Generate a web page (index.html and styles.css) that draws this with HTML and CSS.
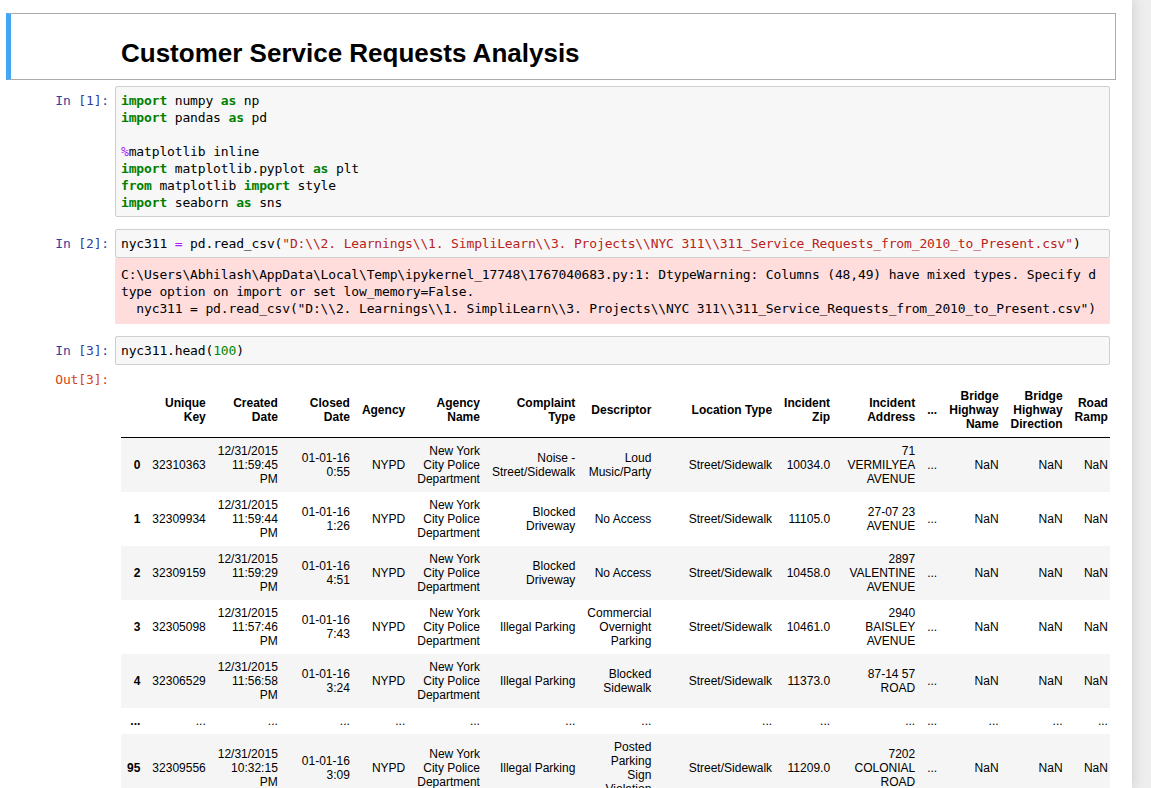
FILE: index.html
```html
<!DOCTYPE html>
<html>
<head>
<meta charset="utf-8">
<title>Customer Service Requests Analysis</title>
<link rel="stylesheet" href="styles.css">
</head>
<body>
<div class="page">
  <div class="notebook">
    <div class="cell text-cell selected">
      <div class="prompt"></div>
      <div class="md">
        <h1>Customer Service Requests Analysis</h1>
      </div>
    </div>

    <div class="cell code-cell">
      <div class="row">
        <div class="prompt in">In&nbsp;[1]:</div>
        <div class="input-area"><pre><span class="kw">import</span> numpy <span class="kw">as</span> np
<span class="kw">import</span> pandas <span class="kw">as</span> pd

<span class="op">%</span>matplotlib inline
<span class="kw">import</span> matplotlib.pyplot <span class="kw">as</span> plt
<span class="kw">from</span> matplotlib <span class="kw">import</span> style
<span class="kw">import</span> seaborn <span class="kw">as</span> sns</pre></div>
      </div>
    </div>

    <div class="cell code-cell">
      <div class="row">
        <div class="prompt in">In&nbsp;[2]:</div>
        <div class="input-area"><pre>nyc311 <span class="op">=</span> pd.read_csv(<span class="str">"D:\\2. Learnings\\1. SimpliLearn\\3. Projects\\NYC 311\\311_Service_Requests_from_2010_to_Present.csv"</span>)</pre></div>
      </div>
      <div class="row">
        <div class="prompt"></div>
        <div class="stderr"><pre>C:\Users\Abhilash\AppData\Local\Temp\ipykernel_17748\1767040683.py:1: DtypeWarning: Columns (48,49) have mixed types. Specify d
type option on import or set low_memory=False.
  nyc311 = pd.read_csv("D:\\2. Learnings\\1. SimpliLearn\\3. Projects\\NYC 311\\311_Service_Requests_from_2010_to_Present.csv")</pre></div>
      </div>
    </div>

    <div class="cell code-cell">
      <div class="row">
        <div class="prompt in">In&nbsp;[3]:</div>
        <div class="input-area"><pre>nyc311.head(<span class="num">100</span>)</pre></div>
      </div>
      <div class="row">
        <div class="prompt out">Out[3]:</div>
        <div class="output">
          <table class="dataframe">
            <thead>
              <tr>
                <th></th>
                <th>Unique Key</th>
                <th>Created Date</th>
                <th>Closed Date</th>
                <th>Agency</th>
                <th>Agency Name</th>
                <th>Complaint Type</th>
                <th>Descriptor</th>
                <th>Location Type</th>
                <th>Incident Zip</th>
                <th>Incident Address</th>
                <th>...</th>
                <th>Bridge Highway Name</th>
                <th>Bridge Highway Direction</th>
                <th>Road Ramp</th>
                <th>Bridge Highway Segment</th>
                <th>Garage Lot Name</th>
                <th>Ferry Direction</th>
                <th>Ferry Terminal Name</th>
                <th>Latitude</th>
                <th>Longitude</th>
                <th>Location</th>
              </tr>
            </thead>
            <tbody>
              <tr>
                <th>0</th><td>32310363</td><td>12/31/2015 11:59:45 PM</td><td>01-01-16 0:55</td><td>NYPD</td><td>New York City Police Department</td><td>Noise - Street/Sidewalk</td><td>Loud Music/Party</td><td>Street/Sidewalk</td><td>10034.0</td><td>71 VERMILYEA AVENUE</td><td>...</td><td>NaN</td><td>NaN</td><td>NaN</td><td>NaN</td><td>NaN</td><td>NaN</td><td>NaN</td><td>40.865682</td><td>-73.923501</td><td>(40.86568153633767, -73.92350095571744)</td>
              </tr>
              <tr>
                <th>1</th><td>32309934</td><td>12/31/2015 11:59:44 PM</td><td>01-01-16 1:26</td><td>NYPD</td><td>New York City Police Department</td><td>Blocked Driveway</td><td>No Access</td><td>Street/Sidewalk</td><td>11105.0</td><td>27-07 23 AVENUE</td><td>...</td><td>NaN</td><td>NaN</td><td>NaN</td><td>NaN</td><td>NaN</td><td>NaN</td><td>NaN</td><td>40.775945</td><td>-73.915094</td><td>(40.775945312321085, -73.91509393898605)</td>
              </tr>
              <tr>
                <th>2</th><td>32309159</td><td>12/31/2015 11:59:29 PM</td><td>01-01-16 4:51</td><td>NYPD</td><td>New York City Police Department</td><td>Blocked Driveway</td><td>No Access</td><td>Street/Sidewalk</td><td>10458.0</td><td>2897 VALENTINE AVENUE</td><td>...</td><td>NaN</td><td>NaN</td><td>NaN</td><td>NaN</td><td>NaN</td><td>NaN</td><td>NaN</td><td>40.870325</td><td>-73.888525</td><td>(40.870324522111424, -73.88852464418646)</td>
              </tr>
              <tr>
                <th>3</th><td>32305098</td><td>12/31/2015 11:57:46 PM</td><td>01-01-16 7:43</td><td>NYPD</td><td>New York City Police Department</td><td>Illegal Parking</td><td>Commercial Overnight Parking</td><td>Street/Sidewalk</td><td>10461.0</td><td>2940 BAISLEY AVENUE</td><td>...</td><td>NaN</td><td>NaN</td><td>NaN</td><td>NaN</td><td>NaN</td><td>NaN</td><td>NaN</td><td>40.835994</td><td>-73.828379</td><td>(40.83599404683083, -73.82837939584206)</td>
              </tr>
              <tr>
                <th>4</th><td>32306529</td><td>12/31/2015 11:56:58 PM</td><td>01-01-16 3:24</td><td>NYPD</td><td>New York City Police Department</td><td>Illegal Parking</td><td>Blocked Sidewalk</td><td>Street/Sidewalk</td><td>11373.0</td><td>87-14 57 ROAD</td><td>...</td><td>NaN</td><td>NaN</td><td>NaN</td><td>NaN</td><td>NaN</td><td>NaN</td><td>NaN</td><td>40.733060</td><td>-73.874170</td><td>(40.73305976760192, -73.8741704009403)</td>
              </tr>
              <tr>
                <th>...</th><td>...</td><td>...</td><td>...</td><td>...</td><td>...</td><td>...</td><td>...</td><td>...</td><td>...</td><td>...</td><td>...</td><td>...</td><td>...</td><td>...</td><td>...</td><td>...</td><td>...</td><td>...</td><td>...</td><td>...</td><td>...</td>
              </tr>
              <tr>
                <th>95</th><td>32309556</td><td>12/31/2015 10:32:15 PM</td><td>01-01-16 3:09</td><td>NYPD</td><td>New York City Police Department</td><td>Illegal Parking</td><td>Posted Parking Sign Violation</td><td>Street/Sidewalk</td><td>11209.0</td><td>7202 COLONIAL ROAD</td><td>...</td><td>NaN</td><td>NaN</td><td>NaN</td><td>NaN</td><td>NaN</td><td>NaN</td><td>NaN</td><td>40.631127</td><td>-74.030418</td><td>(40.63112711520051, -74.03041836548232)</td>
              </tr>
              <tr>
                <th>96</th><td>32308391</td><td>12/31/2015 10:31:48 PM</td><td>01-01-16 1:12</td><td>NYPD</td><td>New York City Police Department</td><td>Blocked Driveway</td><td>No Access</td><td>Street/Sidewalk</td><td>11432.0</td><td>89-19 168 STREET</td><td>...</td><td>NaN</td><td>NaN</td><td>NaN</td><td>NaN</td><td>NaN</td><td>NaN</td><td>NaN</td><td>40.708710</td><td>-73.794010</td><td>(40.70870962870543, -73.79400850916582)</td>
              </tr>
              <tr>
                <th>97</th><td>32305071</td><td>12/31/2015 10:31:39 PM</td><td>12/31/2015 23:41</td><td>NYPD</td><td>New York City Police Department</td><td>Noise - Commercial</td><td>Loud Music/Party</td><td>Club/Bar/Restaurant</td><td>10009.0</td><td>216 AVENUE A</td><td>...</td><td>NaN</td><td>NaN</td><td>NaN</td><td>NaN</td><td>NaN</td><td>NaN</td><td>NaN</td><td>40.730021</td><td>-73.982003</td><td>(40.73002126024502, -73.98200290374538)</td>
              </tr>
              <tr>
                <th>98</th><td>32306554</td><td>12/31/2015 10:30:59 PM</td><td>01-01-16 2:04</td><td>NYPD</td><td>New York City Police Department</td><td>Illegal Parking</td><td>Blocked Hydrant</td><td>Street/Sidewalk</td><td>10465.0</td><td>3200 EAST TREMONT AVENUE</td><td>...</td><td>NaN</td><td>NaN</td><td>NaN</td><td>NaN</td><td>NaN</td><td>NaN</td><td>NaN</td><td>40.833958</td><td>-73.826012</td><td>(40.83395801542312, -73.82601160713645)</td>
              </tr>
              <tr>
                <th>99</th><td>32306210</td><td>12/31/2015 10:30:13 PM</td><td>01-01-16 0:47</td><td>NYPD</td><td>New York City Police Department</td><td>Noise - Street/Sidewalk</td><td>Loud Talking</td><td>Street/Sidewalk</td><td>10467.0</td><td>1290 PELHAM BOULEVARD</td><td>...</td><td>NaN</td><td>NaN</td><td>NaN</td><td>NaN</td><td>NaN</td><td>NaN</td><td>NaN</td><td>40.872651</td><td>-73.867306</td><td>(40.87265088341617, -73.86730621507004)</td>
              </tr>
            </tbody>
          </table>
        </div>
      </div>
    </div>
  </div>
</div>
</body>
</html>
```

FILE: styles.css
```css
html, body {
  margin: 0;
  padding: 0;
}

body {
  background: #eeeeee;
  font-family: "Liberation Sans", Arial, Helvetica, sans-serif;
  font-size: 13px;
  color: #000;
}

.page {
  height: 788px;
  overflow: hidden;
  display: flex;
}

.notebook {
  width: 1132px;
  flex: 0 0 1132px;
  box-sizing: border-box;
  background: #ffffff;
  box-shadow: 0 0 12px 1px rgba(87, 87, 87, 0.2);
  padding: 13px 16px 0 6px;
}

.cell {
  border: 1px solid transparent;
  border-radius: 2px;
  padding: 5px;
}

.text-cell {
  display: flex;
}

.selected {
  border-color: #ababab;
  border-left: 5px solid #42a5f5;
  padding-left: 1px;
  border-radius: 0;
}

.code-cell {
  display: flex;
  flex-direction: column;
}

.row {
  display: flex;
  align-items: flex-start;
}

.prompt {
  flex: 0 0 103px;
  box-sizing: border-box;
  padding: 6px 6px 0 0;
  text-align: right;
  font-family: "DejaVu Sans Mono", "Liberation Mono", monospace;
  font-size: 13px;
  letter-spacing: -0.15px;
  line-height: 17px;
  white-space: nowrap;
}

.prompt.in {
  color: #303f9f;
}

.prompt.out {
  color: #d84315;
}

.md {
  flex: 1 1 auto;
  padding: 7px 7px 8px 6px;
}

.md h1 {
  margin: 14px 0 0 0;
  font-family: "Liberation Sans", Arial, Helvetica, sans-serif;
  font-size: 26px;
  font-weight: bold;
  line-height: 26px;
  color: #000;
}

.input-area {
  flex: 1 1 auto;
  min-width: 0;
  background: #f7f7f7;
  border: 1px solid #cfcfcf;
  border-radius: 2px;
  padding: 5px;
}

pre {
  margin: 0;
  font-family: "DejaVu Sans Mono", "Liberation Mono", monospace;
  font-size: 13px;
  letter-spacing: -0.15px;
  line-height: 17px;
  color: #000;
  white-space: pre;
}

.kw {
  color: #008000;
  font-weight: bold;
}

.op {
  color: #aa22ff;
}

.str {
  color: #ba2121;
}

.num {
  color: #008800;
}

.stderr {
  flex: 1 1 auto;
  min-width: 0;
  background: #ffdddd;
  padding: 8px 6px 7px 6px;
  overflow: hidden;
}

.output {
  flex: 1 1 auto;
  min-width: 0;
  padding: 6px;
  overflow: hidden;
}

.dataframe {
  margin-top: 12px;
  border-collapse: collapse;
  border-spacing: 0;
  border: none;
  font-family: "Liberation Sans", Arial, Helvetica, sans-serif;
  font-size: 12px;
  color: #000;
}

.dataframe thead {
  border-bottom: 1px solid #000;
}

.dataframe th,
.dataframe td {
  text-align: right;
  vertical-align: middle;
  padding: 6px;
  line-height: 14px;
  white-space: normal;
  border: none;
}

.dataframe th {
  font-weight: bold;
}

.dataframe tbody tr:nth-child(odd) {
  background: #f5f5f5;
}
```
